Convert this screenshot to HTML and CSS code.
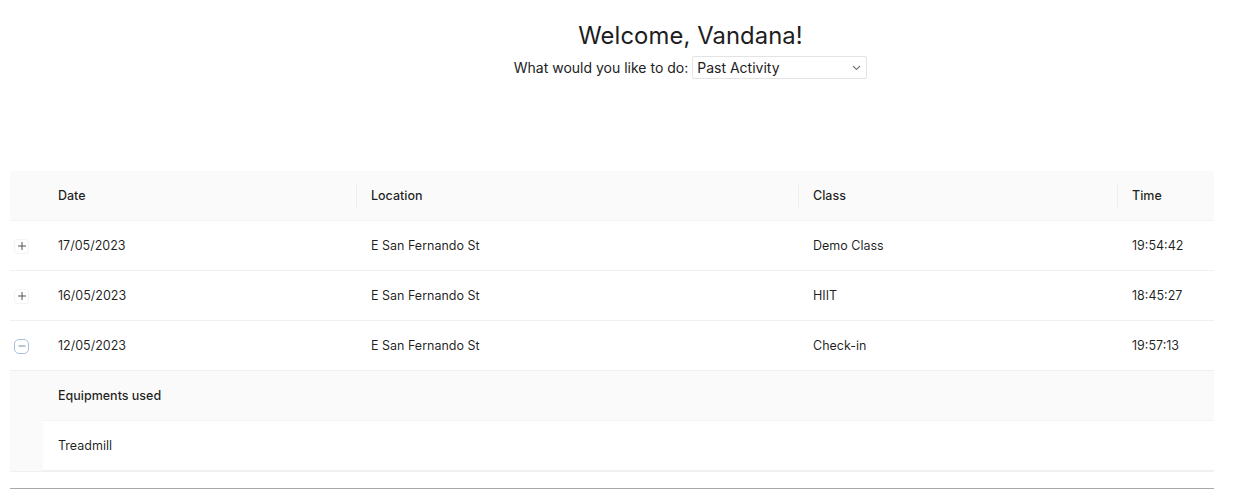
FILE: index.html
```html
<!DOCTYPE html>
<html>
<head>
<meta charset="utf-8">
<link rel="stylesheet" href="styles.css">
</head>
<body>
<header class="top">
  <h1 class="title">Welcome, Vandana!</h1>
  <div class="choose">
    <label for="act">What would you like to do:</label>
    <span class="select-wrap">
      <select id="act" class="select"><option>Past Activity</option></select>
      <svg class="chev" width="9" height="6" viewBox="0 0 9 6"><path d="M1 1l3.5 3.5L8 1" fill="none" stroke="#777" stroke-width="1.1"/></svg>
    </span>
  </div>
</header>

<table class="tbl">
  <colgroup>
    <col class="c-exp"><col class="c-date"><col class="c-loc"><col class="c-class"><col class="c-time">
  </colgroup>
  <thead>
    <tr>
      <th class="exp"></th>
      <th>Date</th>
      <th class="sep">Location</th>
      <th class="sep">Class</th>
      <th class="sep">Time</th>
    </tr>
  </thead>
  <tbody>
    <tr>
      <td class="exp"><span class="eico"><svg width="10" height="10" viewBox="0 0 10 10"><path d="M5 1v8M1 5h8" stroke="#555" stroke-width="1"/></svg></span></td>
      <td>17/05/2023</td><td>E San Fernando St</td><td>Demo Class</td><td>19:54:42</td>
    </tr>
    <tr>
      <td class="exp"><span class="eico"><svg width="10" height="10" viewBox="0 0 10 10"><path d="M5 1v8M1 5h8" stroke="#555" stroke-width="1"/></svg></span></td>
      <td>16/05/2023</td><td>E San Fernando St</td><td>HIIT</td><td>18:45:27</td>
    </tr>
    <tr>
      <td class="exp"><span class="eico open"><svg width="10" height="10" viewBox="0 0 10 10"><path d="M1.5 5h7" stroke="#6e8fb5" stroke-width="1"/></svg></span></td>
      <td>12/05/2023</td><td>E San Fernando St</td><td>Check-in</td><td>19:57:13</td>
    </tr>
    <tr class="expanded">
      <td class="exp-cell" colspan="5">
        <table class="inner">
          <thead><tr><th>Equipments used</th></tr></thead>
          <tbody><tr><td>Treadmill</td></tr></tbody>
        </table>
      </td>
    </tr>
  </tbody>
</table>
<div class="rule"></div>
</body>
</html>
```

FILE: styles.css
```css
html, body {
  margin: 0;
  padding: 0;
  background: #fff;
}
body {
  font-family: Inter, "Noto Sans", sans-serif;
  color: rgba(0,0,0,0.88);
  padding: 0 34px 0 10px;
}
.top {
  display: flex;
  flex-direction: column;
  align-items: center;
  padding-top: 22px;
  padding-left: 157px;
  height: 171px;
  box-sizing: border-box;
}
.title {
  margin: 0;
  font-size: 23.8px;
  font-weight: 400;
  line-height: 28px;
  color: #1d1d1f;
  letter-spacing: 0.1px;
}
.choose {
  display: flex;
  align-items: center;
  gap: 4px;
  margin-top: 6px;
  font-size: 14px;
  color: #222;
}
.select-wrap {
  position: relative;
  display: inline-block;
}
.select {
  -webkit-appearance: none;
  appearance: none;
  width: 175px;
  height: 23px;
  border: 1px solid #e3e3e3;
  border-radius: 2px;
  background: #fff;
  font-family: inherit;
  font-size: 14px;
  color: #222;
  padding: 0 20px 0 4px;
  margin: 0;
}
.chev {
  position: absolute;
  right: 6px;
  top: 9px;
  pointer-events: none;
}
.tbl {
  width: 1204px;
  border-collapse: collapse;
  table-layout: fixed;
  font-size: 12.5px;
}
.c-exp { width: 33px; }
.c-date { width: 313px; }
.c-loc { width: 442px; }
.c-class { width: 319px; }
.c-time { width: 97px; }
.tbl th, .tbl td {
  text-align: left;
  padding: 0 15px;
  height: 49px;
  border-bottom: 1px solid #f0f0f0;
  white-space: nowrap;
}
.tbl > thead th {
  background: #fafafa;
  font-weight: 500;
  position: relative;
  border-bottom: 1px solid #f3f3f3;
}
.tbl > thead th.sep::before {
  content: "";
  position: absolute;
  left: 0;
  top: 50%;
  transform: translateY(-50%);
  width: 1px;
  height: 22px;
  background: #eeeeee;
}
.tbl td.exp, .tbl th.exp {
  padding: 0 0 0 4px;
  text-align: left;
}
.eico {
  display: inline-flex;
  align-items: center;
  justify-content: center;
  width: 15px;
  height: 15px;
  box-sizing: border-box;
  border: 1px solid #f3f3f3;
  border-radius: 4px;
  vertical-align: middle;
}
.eico.open {
  border-color: #a9c1dc;
  border-radius: 5px;
}
.expanded > td.exp-cell {
  padding: 0 0 0 33px;
  height: auto;
  background: #fafafa;
  border-bottom: 1px solid #f0f0f0;
}
.inner {
  width: 100%;
  border-collapse: collapse;
  font-size: 12.5px;
}
.inner th, .inner td {
  text-align: left;
  padding: 0 15px;
  height: 49px;
}
.inner th {
  background: #fafafa;
  font-weight: 500;
  border-bottom: 1px solid #f3f3f3;
}
.inner td {
  background: #fff;
}
.rule {
  margin-top: 16px;
  width: 1204px;
  border-top: 1px solid #a8a8a8;
}
```
